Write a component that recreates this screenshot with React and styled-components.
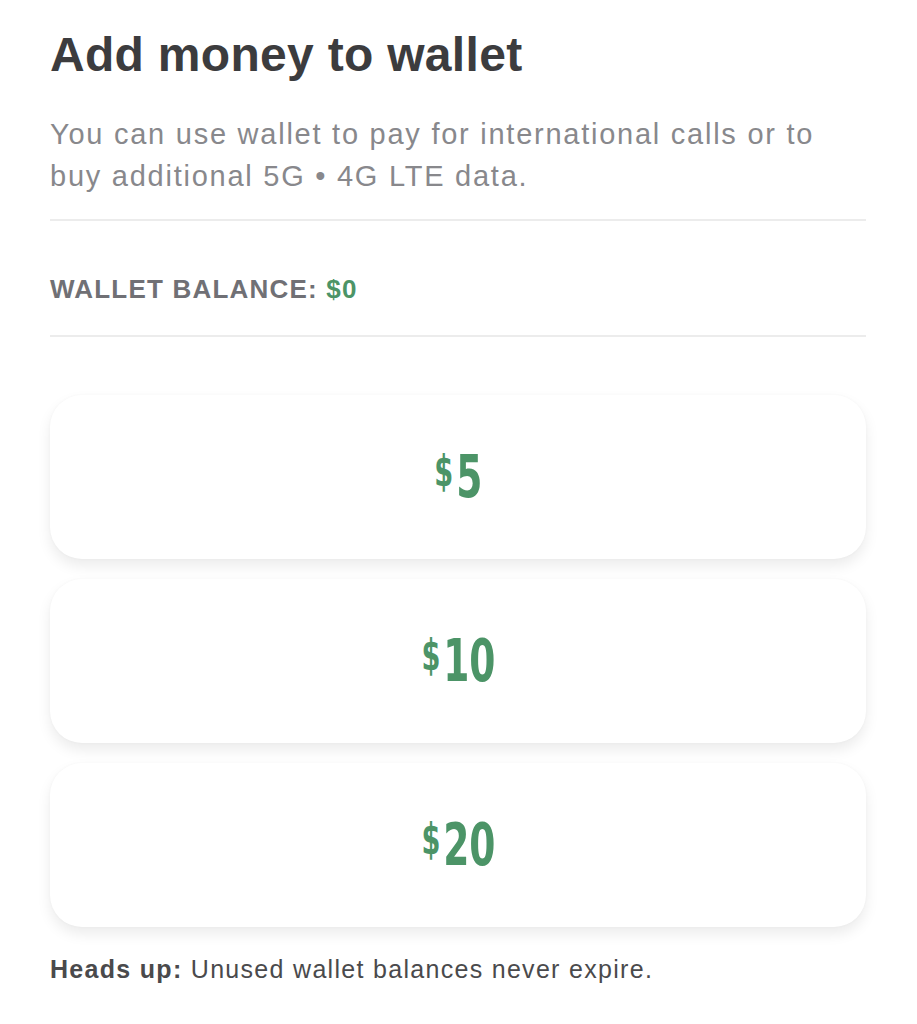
import React from "react";
import styled, {createGlobalStyle} from "styled-components";

const amounts = [5, 10, 20];

const App = () => {
  return (
    <Page>
      <GlobalStyle />
      <Title>Add money to wallet</Title>
      <Description>
        You can use wallet to pay for international calls or to buy additional
        5G • 4G LTE data.
      </Description>
      <Balance>
        WALLET BALANCE: <Money>$0</Money>
      </Balance>
      <CardList>
        {amounts.map((amount) => (
          <AmountCard key={amount}>
            <Amount>
              <Dollar>$</Dollar>
              {amount}
            </Amount>
          </AmountCard>
        ))}
      </CardList>
      <Note>
        <b>Heads up:</b> Unused wallet balances never expire.
      </Note>
    </Page>
  );
};

const GlobalStyle = createGlobalStyle`
  body {
    margin: 0;
    background: #ffffff;
    font-family: "Liberation Sans", Arial, sans-serif;
  }
`;

const Page = styled.div`
  width: 816px;
  padding: 27px 51px 40px 50px;
`;

const Title = styled.h1`
  margin: 0;
  font-size: 48px;
  line-height: 56px;
  font-weight: 700;
  letter-spacing: 0.3px;
  color: #3c3c3e;
`;

const Description = styled.p`
  margin: 30px 0 0;
  padding-bottom: 22px;
  font-size: 29px;
  line-height: 42px;
  letter-spacing: 1.75px;
  color: #88888c;
  border-bottom: 2px solid #ececec;
`;

const Balance = styled.div`
  padding: 45px 0 23px;
  font-size: 26px;
  line-height: 46px;
  font-weight: 700;
  letter-spacing: 1.2px;
  color: #707075;
  border-bottom: 2px solid #ececec;
`;

const Money = styled.span`
  color: #4c9467;
`;

const CardList = styled.div`
  display: flex;
  flex-direction: column;
  gap: 20px;
  margin-top: 58px;
`;

const AmountCard = styled.div`
  height: 164px;
  display: flex;
  align-items: center;
  justify-content: center;
  background: #ffffff;
  border-radius: 32px;
  box-shadow: 0 7px 14px rgba(0, 0, 0, 0.08), 0 0 3px rgba(0, 0, 0, 0.03);
`;

const Amount = styled.div`
  display: flex;
  align-items: flex-start;
  font-family: "DejaVu Sans Condensed", "DejaVu Sans", sans-serif;
  font-weight: 700;
  font-size: 58px;
  line-height: 1;
  color: #4c9467;
  transform: scaleX(0.72);
`;

const Dollar = styled.span`
  font-size: 42px;
  line-height: 1;
  margin: 3px 4px 0 0;
`;

const Note = styled.p`
  margin: 27px 0 0;
  font-size: 25px;
  line-height: 30px;
  letter-spacing: 1.3px;
  color: #4a4a4c;

  b {
    font-weight: 700;
  }
`;

export default App;
